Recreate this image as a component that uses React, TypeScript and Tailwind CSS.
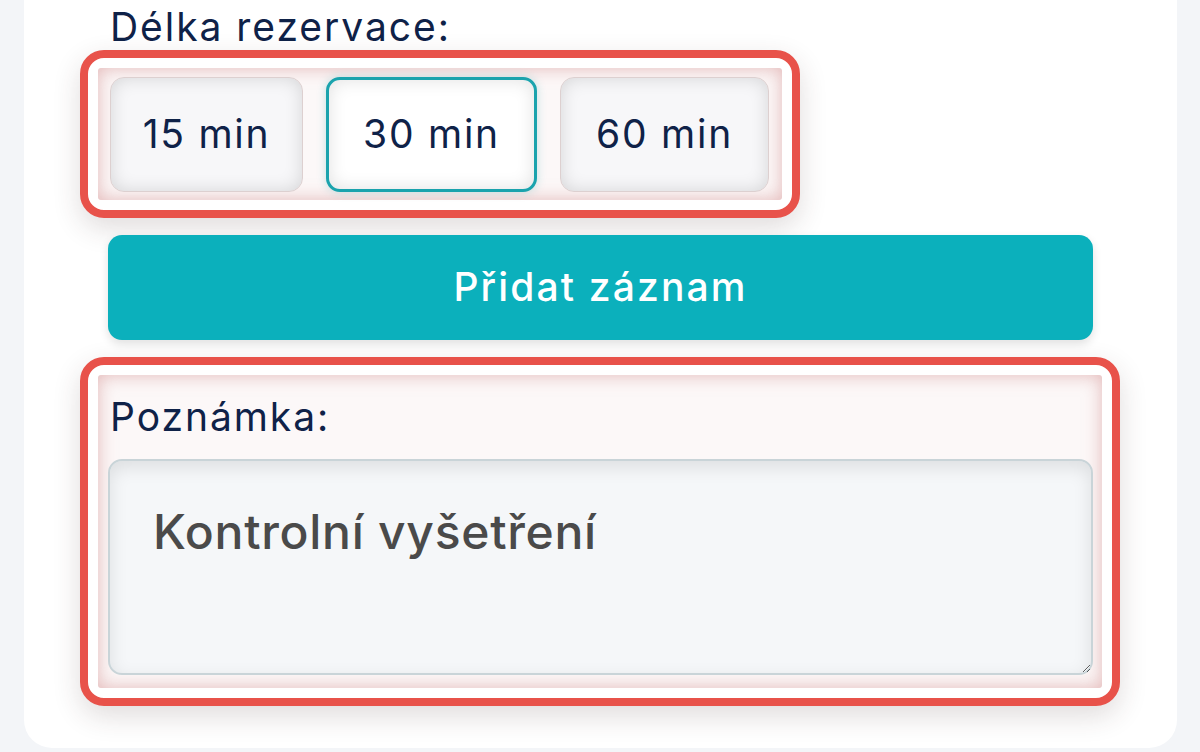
import { useState } from "react";

const durations = [
  { label: "15 min", width: "w-[193px]" },
  { label: "30 min", width: "w-[211px]" },
  { label: "60 min", width: "w-[209px]" },
];

function Highlight({ className, children }: { className: string; children: React.ReactNode }) {
  return (
    <div
      className={`rounded-[24px] border-[8px] border-[#e8524a] bg-white p-[10px] shadow-[0_10px_28px_rgba(60,40,40,0.16)] ${className}`}
    >
      <div className="h-full rounded-[3px] bg-[#fcf8f8] shadow-[inset_0_0_18px_rgba(205,130,130,0.55)]">{children}</div>
    </div>
  );
}

export default function App() {
  const [duration, setDuration] = useState("30 min");
  const [note, setNote] = useState("Kontrolní vyšetření");

  return (
    <div className="h-[752px] w-[1200px] overflow-hidden bg-[#f3f5f8] pl-[24px] pr-[23px] font-['Inter',sans-serif] text-[#0f2248]">
      <div className="flex h-[748px] flex-col rounded-b-[28px] bg-white pl-[56px]">
        <label className="ml-[30px] mt-[5px] h-[45px] text-[39px] leading-[44px] tracking-[0.05em]">
          Délka rezervace:
        </label>
        <Highlight className="h-[168px] w-[720px]">
          <div className="flex h-full items-center gap-[23px] px-[12px]">
            {durations.map((d) => (
              <button
                key={d.label}
                type="button"
                onClick={() => setDuration(d.label)}
                className={
                  d.label === duration
                    ? `flex h-[115px] ${d.width} items-center justify-center rounded-[14px] border-[3px] border-[#1aa3ad] bg-white text-[39px] tracking-[0.045em] shadow-[inset_0_0_18px_rgba(0,0,0,0.12),0_0_10px_rgba(26,163,173,0.25)]`
                    : `flex h-[115px] ${d.width} items-center justify-center rounded-[14px] border border-[#ddd0d0] bg-[#f7f7f9] text-[39px] tracking-[0.045em] shadow-[inset_0_0_18px_rgba(0,0,0,0.14)]`
                }
              >
                {d.label}
              </button>
            ))}
          </div>
        </Highlight>
        <button
          type="button"
          className="ml-[28px] mt-[17px] h-[105px] w-[985px] rounded-[14px] bg-[#0bb0bc] text-[39px] font-medium tracking-[0.055em] text-white shadow-[0_4px_10px_rgba(0,0,0,0.12)]"
        >
          Přidat záznam
        </button>
        <Highlight className="mt-[17px] h-[349px] w-[1040px]">
          <div className="flex h-full flex-col px-[10px] pt-[16px]">
            <label className="ml-[2px] h-[68px] text-[39px] leading-[52px] tracking-[0.05em]">Poznámka:</label>
            <textarea
              value={note}
              onChange={(e) => setNote(e.target.value)}
              className="h-[216px] w-[985px] resize-y rounded-[14px] border-2 border-[#c9d4d8] bg-[#f5f7f9] pl-[43px] pr-[20px] pt-[42px] text-[48px] font-medium leading-[1.2] tracking-[0.015em] text-[#4a4a4a] shadow-[inset_0_6px_18px_rgba(0,0,0,0.1)] outline-none"
            />
          </div>
        </Highlight>
      </div>
    </div>
  );
}
